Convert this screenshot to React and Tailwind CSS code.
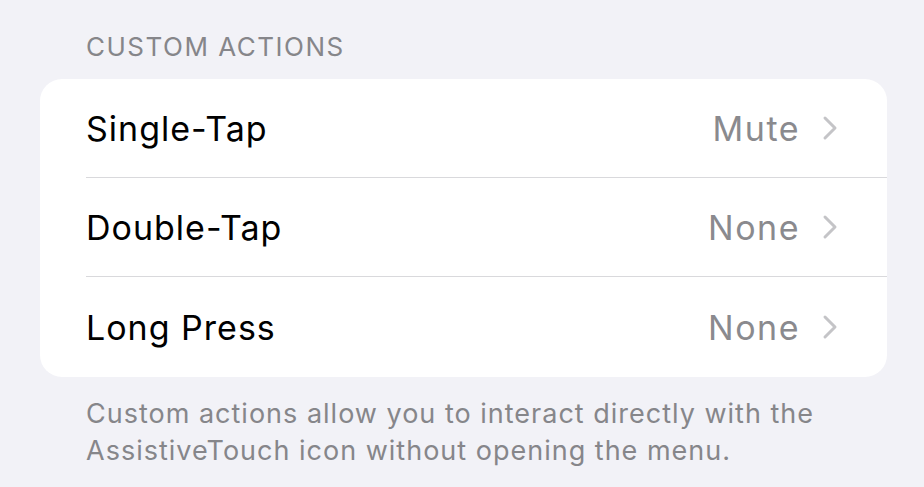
const rows = [
  { label: 'Single-Tap', value: 'Mute' },
  { label: 'Double-Tap', value: 'None' },
  { label: 'Long Press', value: 'None' },
];

function Chevron() {
  return (
    <svg width="16" height="28" viewBox="0 0 16 28" fill="none" className="shrink-0">
      <path d="M3 4 L13 14 L3 24" stroke="#c4c4c7" strokeWidth="3" strokeLinecap="round" strokeLinejoin="round" />
    </svg>
  );
}

export default function App() {
  return (
    <div className="w-[924px] h-[487px] bg-[#f2f2f7] pt-[30px] px-[40px] font-['Inter',sans-serif] overflow-hidden">
      {/* Section header */}
      <div className="pl-[46px] text-[26px] leading-[34px] text-[#86868a] tracking-[1.5px]">
        CUSTOM ACTIONS
      </div>

      {/* Card */}
      <div className="mt-[15px] w-[847px] bg-white rounded-[22px] overflow-hidden">
        {rows.map((row, i) => (
          <div key={row.label} className="pl-[46px]">
            <div
              className={
                'flex items-center justify-between pr-[49px] ' +
                (i < rows.length - 1 ? 'h-[99px] border-b border-[#d9d9dc]' : 'h-[100px]')
              }
            >
              <span className="text-[34px] text-black tracking-[1px]">{row.label}</span>
              <div className="flex items-center gap-[22px]">
                <span className="text-[34px] text-[#8a8a8e] tracking-[1.5px]">{row.value}</span>
                <Chevron />
              </div>
            </div>
          </div>
        ))}
      </div>

      {/* Footer */}
      <p className="mt-[18px] pl-[46px] text-[27px] leading-[37px] text-[#86868a] tracking-[1px]">
        Custom actions allow you to interact directly with the
        <br />
        AssistiveTouch icon without opening the menu.
      </p>
    </div>
  );
}
